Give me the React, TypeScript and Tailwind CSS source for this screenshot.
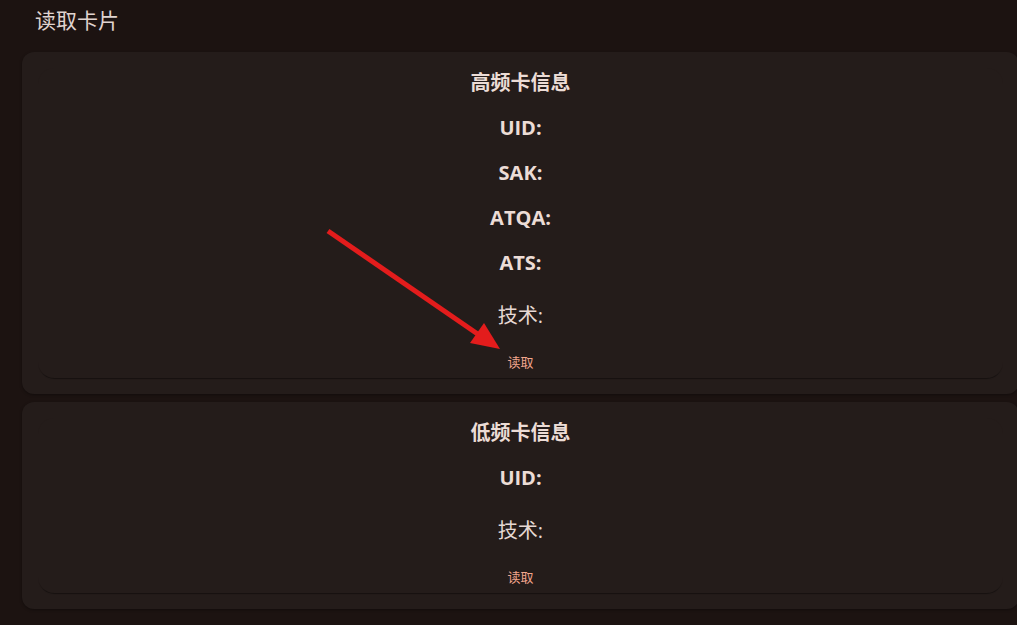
const FONT = { fontFamily: '"Open Sans", "Noto Sans CJK SC", sans-serif' };

function InfoCard({ title, fields }: { title: string; fields: string[] }) {
  return (
    <div className="rounded-xl bg-[#241c1a] px-4 pt-4 pb-4 shadow-[0_1px_3px_rgba(0,0,0,0.35)]">
      <div className="flex flex-col items-center rounded-2xl bg-[#241c1a] pb-[6px] shadow-[0_2px_1px_-1px_rgba(0,0,0,0.4)]">
        <h2 className="text-[20px] leading-[30px] font-bold text-[#ecdcd6]">{title}</h2>
        {fields.map((f) => (
          <div key={f} className="mt-[15px] text-[20px] leading-[30px] font-bold text-[#ecdcd6]">
            {f}:
          </div>
        ))}
        <div className="mt-[23px] text-[20px] leading-[30px] text-[#e6d8d3]">技术:</div>
        <button className="mt-[21px] text-[13px] leading-[20px] text-[#f2a58c]">读取</button>
      </div>
    </div>
  );
}

export default function App() {
  return (
    <div className="relative h-[625px] w-[1017px] overflow-hidden bg-[#1c1311]" style={FONT}>
      <div className="w-[1041px] px-[22px]">
        <h1 className="pt-[5px] pl-[13px] text-[21px] leading-[30px] font-normal text-[#e0d4d0]">读取卡片</h1>
        <div className="mt-[17px] flex flex-col gap-2">
          <InfoCard title="高频卡信息" fields={["UID", "SAK", "ATQA", "ATS"]} />
          <InfoCard title="低频卡信息" fields={["UID"]} />
        </div>
      </div>
      <svg className="pointer-events-none absolute left-0 top-0" width="1017" height="625">
        <line x1="328" y1="231" x2="482" y2="337" stroke="#e31c1c" strokeWidth="5" />
        <polygon points="500,349 470,343 484,323" fill="#e31c1c" />
      </svg>
    </div>
  );
}
